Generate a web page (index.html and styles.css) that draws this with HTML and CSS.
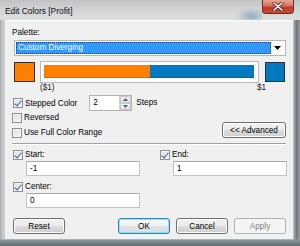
FILE: index.html
```html
<!DOCTYPE html>
<html>
<head>
<meta charset="utf-8">
<link rel="stylesheet" href="styles.css">
</head>
<body>
<div class="win">
  <div class="titlebar">
    <span class="title">Edit Colors [Profit]</span>
    <div class="glass"></div>
    <div class="close">
      <svg width="12" height="9" viewBox="0 0 12 9"><path d="M2 1 L10 8 M10 1 L2 8" stroke="#5a2a22" stroke-width="3.2" stroke-linecap="round"/><path d="M2 1 L10 8 M10 1 L2 8" stroke="#ffffff" stroke-width="1.6" stroke-linecap="round"/></svg>
    </div>
  </div>
  <div class="client">
    <div class="lbl palette-lbl">Palette:</div>
    <div class="select">
      <div class="sel-val">Custom Diverging</div>
      <div class="sel-arrow"><svg width="7" height="4" viewBox="0 0 7 4"><path d="M0 0 H7 L3.5 4 Z" fill="#000"/></svg></div>
    </div>
    <div class="ramp-row">
      <div class="swatch sw-orange"></div>
      <div class="ramp"><div class="ramp-o"></div><div class="ramp-b"></div></div>
      <div class="swatch sw-blue"></div>
    </div>
    <div class="ramp-labels"><span>($1)</span><span>$1</span></div>
    <div class="stepped-row">
      <label class="check"><span class="cb on"></span>Stepped Color</label>
      <div class="spin">
        <div class="spin-val">2</div>
        <div class="spin-btns">
          <div class="spin-btn"><svg width="5" height="3" viewBox="0 0 5 3"><path d="M0 3 H5 L2.5 0 Z" fill="#4d6185"/></svg></div>
          <div class="spin-btn"><svg width="5" height="3" viewBox="0 0 5 3"><path d="M0 0 H5 L2.5 3 Z" fill="#4d6185"/></svg></div>
        </div>
      </div>
      <span class="lbl steps">Steps</span>
    </div>
    <div class="opts">
      <div class="opts-left">
        <label class="check reversed"><span class="cb"></span>Reversed</label>
        <label class="check fullrange"><span class="cb"></span>Use Full Color Range</label>
      </div>
      <button class="btn adv">&lt;&lt; Advanced</button>
    </div>
    <div class="sep"></div>
    <div class="range">
      <div class="range-col">
        <label class="check"><span class="cb on"></span>Start:</label>
        <div class="input">-1</div>
      </div>
      <div class="range-col end">
        <label class="check"><span class="cb on"></span>End:</label>
        <div class="input">1</div>
      </div>
      <div class="range-col center">
        <label class="check"><span class="cb on"></span>Center:</label>
        <div class="input">0</div>
      </div>
    </div>
    <div class="buttons">
      <button class="btn reset">Reset</button>
      <div class="btn-group">
        <button class="btn ok">OK</button>
        <button class="btn">Cancel</button>
        <button class="btn disabled">Apply</button>
      </div>
    </div>
  </div>
</div>
</body>
</html>
```
FILE: styles.css
```css
* { box-sizing: border-box; }
html, body { margin: 0; padding: 0; }
body {
  width: 300px;
  height: 246px;
  overflow: hidden;
  font-family: "Liberation Sans", Arial, sans-serif;
  font-size: 8.2px;
  color: #000;
  background: #6f7f86;
}
.win {
  width: 300px;
  height: 246px;
  display: flex;
  flex-direction: column;
  background:
    linear-gradient(180deg, rgba(0,0,0,0) 0, rgba(0,0,0,0) 239px, #8d979c 240px, #5d6a71 246px),
    linear-gradient(90deg, #a9adb0 0, #c9cbcd 3px, #c9cbcd 293px, #8a9095 295px, #6f777c 297px, #9aa0a4 300px);
  position: relative;
}
.titlebar {
  height: 20px;
  flex: none;
  position: relative;
  display: flex;
  align-items: center;
  padding-left: 5px;
  background: linear-gradient(180deg, #c2c3c4 0, #d3d4d5 10px, #dcdddd 20px);
}
.title {
  font-size: 8.4px;
  color: #101010;
  margin-top: 2px;
}
.glass {
  position: absolute;
  left: 236px;
  top: 8px;
  width: 26px;
  height: 12px;
  background: radial-gradient(ellipse at 60% 70%, rgba(120,160,185,0.75), rgba(150,180,200,0) 70%);
}
.close {
  position: absolute;
  left: 262px;
  top: 0;
  width: 32px;
  height: 14px;
  border: 1px solid #6d2a20;
  border-top: none;
  border-radius: 0 0 4px 4px;
  background: linear-gradient(180deg, #e9a596 0, #d8705c 45%, #c0392a 55%, #c84a33 100%);
  display: flex;
  align-items: center;
  justify-content: center;
}
.client {
  margin: 0 7px 7px 5px;
  height: 219px;
  flex: none;
  background: #f0f0f0;
  border-top: 1px solid #fbfbfb;
  padding: 7px 7px 0 7px;
  display: flex;
  flex-direction: column;
}
.lbl { line-height: 10px; }
.palette-lbl { height: 10px; }
.select {
  margin: 2px 0 0 2px;
  height: 16px;
  display: flex;
  border: 1px solid #b6b6b6;
  background: #fff;
  padding: 1px;
}
.sel-val {
  flex: 1;
  background: #3399ff;
  color: #fff;
  line-height: 12px;
  padding-left: 2px;
  outline: 1px dotted #1c3f7a;
  outline-offset: -1px;
}
.sel-arrow {
  width: 13px;
  display: flex;
  align-items: center;
  justify-content: center;
}
.ramp-row {
  margin: 5px 0 0 2px;
  height: 22px;
  display: flex;
  align-items: flex-start;
}
.swatch {
  width: 21px;
  height: 20px;
  margin-top: 1px;
  border: 1px solid #2e2e2e;
}
.sw-orange { background: #ff8000; }
.sw-blue { background: #0079c1; width: 20px; margin-left: 6px; }
.ramp {
  margin-left: 5px;
  width: 219px;
  height: 22px;
  border: 1px solid #b9b9b9;
  background: #fff;
  padding: 3px 4px 4px 3px;
  display: flex;
}
.ramp-o { width: 106px; background: #ff8000; border-bottom: 1px solid #d06a10; }
.ramp-b { flex: 1; background: #0079c1; border-bottom: 1px solid #0a5f95; }
.ramp-labels {
  height: 10px;
  line-height: 10px;
  width: 254px;
  display: flex;
  justify-content: space-between;
  padding-left: 28px;
  color: #1a1a1a;
}
.check {
  display: flex;
  align-items: center;
  height: 11px;
  line-height: 11px;
  gap: 2px;
}
.cb {
  width: 10px;
  height: 10px;
  flex: none;
  border: 1px solid #8f8f8f;
  background: linear-gradient(135deg, #dcdcdc, #f7f7f7);
  box-shadow: inset 0 0 0 1px #f4f4f4;
  position: relative;
}
.cb.on::after {
  content: "";
  position: absolute;
  left: 2px;
  top: 0px;
  width: 3px;
  height: 6px;
  border-right: 1.5px solid #3a5a9a;
  border-bottom: 1.5px solid #3a5a9a;
  transform: rotate(40deg);
}
.stepped-row {
  margin-top: 2px;
  height: 16px;
  display: flex;
  align-items: center;
  padding-left: 1px;
}
.spin {
  margin-left: 12px;
  width: 43px;
  height: 16px;
  display: flex;
  border: 1px solid #b3b3b3;
  background: #fff;
}
.spin-val {
  flex: 1;
  line-height: 14px;
  padding-left: 3px;
}
.spin-btns {
  width: 12px;
  display: flex;
  flex-direction: column;
  border-left: 1px solid #d0d0d0;
}
.spin-btn {
  flex: 1;
  display: flex;
  align-items: center;
  justify-content: center;
  background: linear-gradient(180deg, #f4f4f4, #dedede);
  border: 1px solid #c9c9c9;
}
.steps { margin-left: 4px; }
.opts {
  height: 27px;
  display: flex;
  justify-content: space-between;
  align-items: flex-start;
}
.opts-left { display: flex; flex-direction: column; }
.reversed { margin-top: 1px; }
.fullrange { margin-top: 4px; }
.btn {
  font-family: "Liberation Sans", Arial, sans-serif;
  font-size: 8.2px;
  color: #000;
  height: 16px;
  width: 52px;
  padding: 0;
  border: 1px solid #707070;
  border-radius: 3px;
  background: linear-gradient(180deg, #f2f2f2 0, #ebebeb 50%, #dddddd 51%, #cfcfcf 100%);
  box-shadow: inset 0 0 0 1px #fcfcfc;
}
.adv { width: 64px; margin-top: 11px; }
.sep {
  margin-top: 5px;
  height: 2px;
  border-top: 1px solid #a0a0a0;
  border-bottom: 1px solid #ffffff;
}
.range {
  margin-top: 4px;
  display: grid;
  grid-template-columns: 148px 1fr;
  row-gap: 5px;
}
.range-col { display: flex; flex-direction: column; }
.range-col .check { padding-left: 1px; }
.range-col.end .check { padding-left: 0; }
.input {
  margin-top: 1px;
  margin-left: 14px;
  width: 114px;
  height: 15px;
  border: 1px solid #c3c3c3;
  border-top-color: #a8a8a8;
  background: #fff;
  line-height: 13px;
  padding-left: 3px;
}
.range-col.end .input { margin-left: 13px; }
.buttons {
  margin-top: 10px;
  display: flex;
  justify-content: space-between;
  padding-left: 1px;
}
.btn-group { display: flex; gap: 6px; }
.btn.ok {
  border-color: #3c7fb1;
  box-shadow: inset 0 0 0 1px #8ee0fb;
  background: linear-gradient(180deg, #f6f8fa 0, #eef1f3 50%, #e2e6e9 51%, #d8dde1 100%);
}
.btn.disabled {
  color: #838383;
  border-color: #adb2b5;
  background: #f4f4f4;
  box-shadow: none;
}
```
